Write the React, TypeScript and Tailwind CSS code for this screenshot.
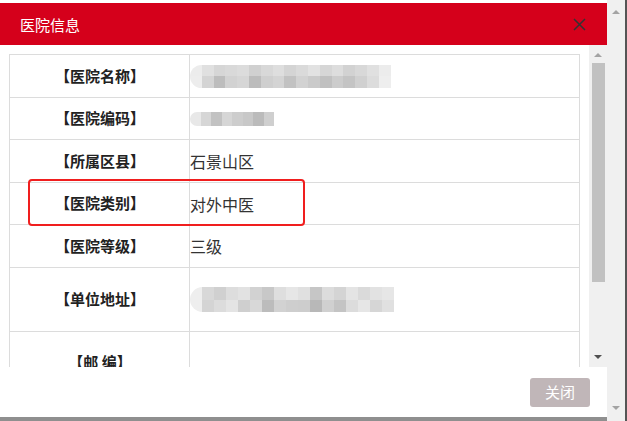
import React from "react";

const FONT = { fontFamily: '"Noto Sans CJK SC", "Noto Sans", sans-serif' };

function Mosaic({ rows, cellW, cellH, colors }: { rows: number; cellW: number; cellH: number; colors: string[][] }) {
  return (
    <div className="flex flex-col">
      {Array.from({ length: rows }).map((_, r) => (
        <div key={r} className="flex">
          {colors[r].map((c, i) => (
            <div key={i} style={{ width: cellW, height: cellH, background: c }} />
          ))}
        </div>
      ))}
    </div>
  );
}

const m1 = [
  ["#ececec", "#e0e0e0", "#d6d6d6", "#d9d9d9", "#dcdcdc", "#d0d0d0", "#d8d8d8", "#dedede", "#d4d4d4", "#dadada", "#e2e2e2", "#d6d6d6", "#dddddd", "#d2d2d2", "#d8d8d8", "#e0e0e0", "#ececec"],
  ["#ededed", "#d4d4d4", "#bdbdbd", "#d2d2d2", "#d6d6d6", "#bcbcbc", "#cfcfcf", "#d4d4d4", "#c2c2c2", "#d2d2d2", "#cacaca", "#c0c0c0", "#cccccc", "#c4c4c4", "#d0d0d0", "#dcdcdc", "#eeeeee"],
];
const m2 = [["#e8e8e8", "#d6d6d6", "#c2c2c2", "#d6d6d6", "#cdcdcd", "#c8c8c8", "#bbbbbb", "#cfcfcf"]];
const m3 = [
  ["#eeeeee", "#d8d8d8", "#d0d0d0", "#dddddd", "#e2e2e2", "#d2d2d2", "#c8c8c8", "#dedede", "#e6e6e6", "#e0e0e0", "#c6c6c6", "#dcdcdc", "#d4d4d4", "#e4e4e4", "#dadada", "#e2e2e2", "#e6e6e6"],
  ["#eeeeee", "#d4d4d4", "#dcdcdc", "#e4e4e4", "#cfcfcf", "#d8d8d8", "#bcbcbc", "#d2d2d2", "#cecece", "#cdcdcd", "#b8b8b8", "#d0d0d0", "#c4c4c4", "#dcdcdc", "#e6e6e6", "#d6d6d6", "#e0e0e0"],
];

const rows: { label: string; h: number; value?: React.ReactNode }[] = [
  { label: "【医院名称】", h: 43, value: <div className="rounded-l-full overflow-hidden"><Mosaic rows={2} cellW={11.8} cellH={11.5} colors={m1} /></div> },
  { label: "【医院编码】", h: 42, value: <div className="rounded-l-full overflow-hidden"><Mosaic rows={1} cellW={10.5} cellH={14} colors={m2} /></div> },
  { label: "【所属区县】", h: 43, value: <span>石景山区</span> },
  { label: "【医院类别】", h: 42, value: <span>对外中医</span> },
  { label: "【医院等级】", h: 43, value: <span>三级</span> },
  { label: "【单位地址】", h: 64, value: <div className="rounded-l-full overflow-hidden"><Mosaic rows={2} cellW={12} cellH={12.5} colors={m3} /></div> },
  { label: "【邮 编】", h: 62 },
];

function Tri({ up, color, size = 4 }: { up: boolean; color: string; size?: number }) {
  return (
    <div
      style={{
        width: 0,
        height: 0,
        borderLeft: `${size}px solid transparent`,
        borderRight: `${size}px solid transparent`,
        ...(up ? { borderBottom: `${size}px solid ${color}` } : { borderTop: `${size}px solid ${color}` }),
      }}
    />
  );
}

export default function App() {
  return (
    <div className="w-[627px] h-[421px] flex bg-[#f0f0f0] overflow-hidden text-[#333]" style={FONT}>
      <div className="w-[607px] flex flex-col shrink-0">
        <div className="h-[3px] bg-white shrink-0" />
        <div className="h-[42px] shrink-0 bg-[#d5001b] flex items-center justify-between pl-[20px] pr-[20px]">
          <span className="text-white text-[15px] leading-none">医院信息</span>
          <svg width="13" height="13" viewBox="0 0 13 13" className="mr-[1px]">
            <path d="M1 1 L12 12 M12 1 L1 12" stroke="#333" strokeWidth="1.5" />
          </svg>
        </div>
        <div className="h-[322px] shrink-0 flex">
          <div className="w-[589px] bg-white pl-[9px] pt-[9px] overflow-hidden relative">
            <div className="w-[571px] border-t border-l border-r border-[#dcdcdc]">
              {rows.map((r, i) => (
                <div key={i} className="flex border-b border-[#dcdcdc]" style={{ height: r.h }}>
                  <div className="w-[180px] shrink-0 border-r border-[#dcdcdc] flex items-center justify-center font-bold text-[15px] text-[#222] pl-[1px]">
                    {r.label}
                  </div>
                  <div className="flex-1 flex items-center text-[16px] text-[#333] pl-[0px]">
                    {r.value}
                  </div>
                </div>
              ))}
            </div>
            <div className="absolute left-[28px] top-[134px] w-[277px] h-[47px] border-2 border-[#f01e1e] rounded-[4px]" />
          </div>
          <div className="w-[18px] bg-[#f0f0f0] flex flex-col items-center pt-[8px] pb-[8px]">
            <Tri up color="#a3a3a3" />
            <div className="w-[13px] h-[219px] bg-[#c1c1c1] mt-[6px]" />
            <div className="flex-1" />
            <Tri up={false} color="#505050" />
          </div>
        </div>
        <div className="h-[50px] shrink-0 bg-white flex items-center justify-end pr-[17px]">
          <div className="w-[60px] h-[29px] rounded-[3px] bg-[#c0b6b8] text-white text-[15px] flex items-center justify-center">
            关闭
          </div>
        </div>
        <div className="flex-1 bg-[#8f8f8f]" />
      </div>
      <div className="w-[20px] flex flex-col items-center pt-[10px] pb-[11px] bg-[#f0f0f0] border-r-2 border-[#555]">
        <Tri up color="#a3a3a3" />
        <div className="flex-1" />
        <Tri up={false} color="#a3a3a3" />
      </div>
    </div>
  );
}
